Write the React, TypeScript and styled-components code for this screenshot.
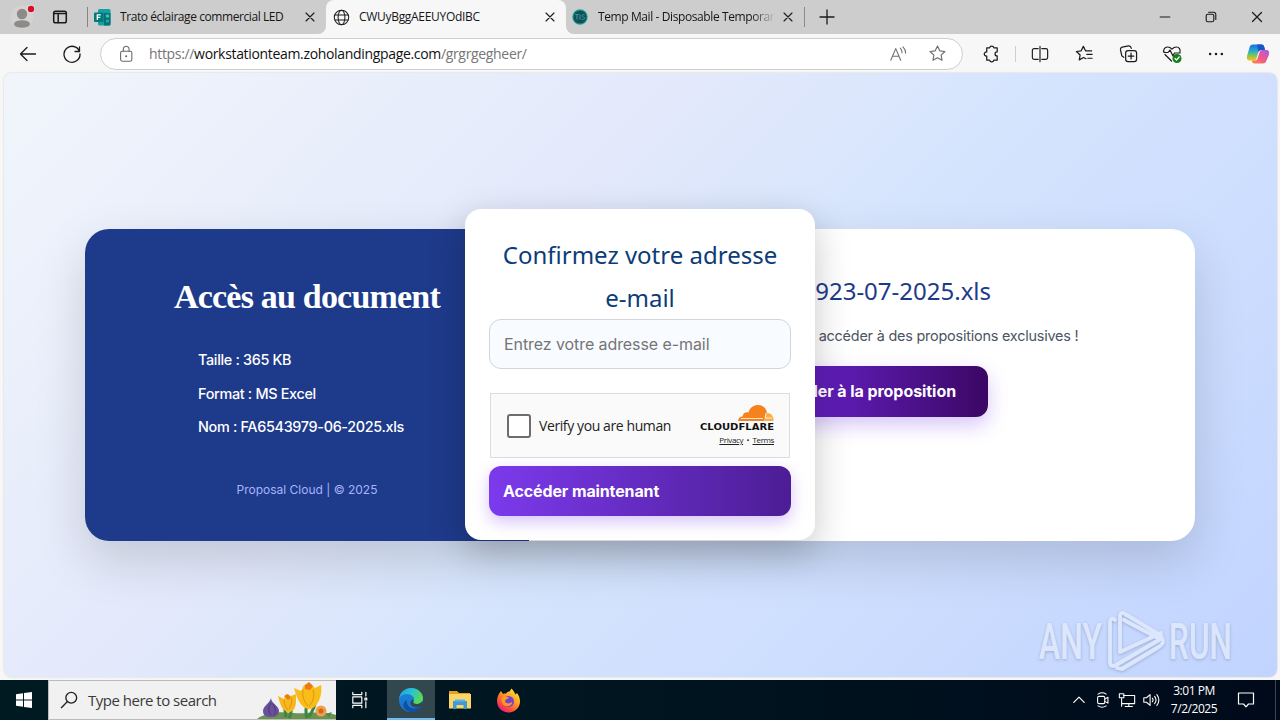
import React from 'react';
import styled, { createGlobalStyle } from 'styled-components';

const UI = `'Open Sans', 'Noto Sans', sans-serif`;

const Global = createGlobalStyle`
  * { box-sizing: border-box; }
  body { margin: 0; background: #f7f7f7; overflow: hidden; font-family: ${UI}; }
`;

const Screen = styled.div`
  width: 1280px;
  height: 720px;
  display: flex;
  flex-direction: column;
  background: #f7f7f7;
  overflow: hidden;
`;

/* ---------- browser chrome ---------- */
const TabStrip = styled.header`
  display: flex;
  height: 34px;
  background: #cdcdcd;
`;
const Slot = styled.div<{ $w: number }>`
  width: ${p => p.$w}px;
  flex: none;
  display: flex;
  align-items: center;
  justify-content: center;
`;
const Rule = styled.i<{ $h: number; $c: string }>`
  width: 1px;
  flex: none;
  height: ${p => p.$h}px;
  background: ${p => p.$c};
  align-self: center;
`;
const Tab = styled.div<{ $w: number; $radius: string; $active?: boolean; $pad: number }>`
  width: ${p => p.$w}px;
  flex: none;
  display: flex;
  align-items: center;
  padding-left: ${p => p.$pad}px;
  padding-right: 8px;
  background: ${p => (p.$active ? '#f7f7f7' : '#cdcdcd')};
  border-radius: ${p => p.$radius};
`;
const TabBacking = styled.div`
  display: flex;
  background: linear-gradient(#cdcdcd 50%, #f7f7f7 50%);
`;
const TabTitle = styled.span<{ $ls: number; $fade?: boolean }>`
  flex: 1;
  margin-left: 9px;
  font-size: 12px;
  line-height: 16px;
  letter-spacing: ${p => p.$ls}px;
  color: #161616;
  white-space: nowrap;
  overflow: hidden;
  ${p => p.$fade && '-webkit-mask-image: linear-gradient(90deg, #000 86%, transparent 100%);'}
`;
const Grow = styled.div`
  flex: 1;
`;
const Toolbar = styled.div`
  display: flex;
  align-items: center;
  height: 39px;
  padding-left: 6px;
`;
const Address = styled.div`
  width: 863px;
  height: 32px;
  margin-left: 6px;
  margin-right: 6px;
  display: flex;
  align-items: center;
  padding: 0 15px 0 16px;
  border: 1px solid #cfcfcf;
  border-radius: 16px;
  background: #fff;
`;
const Url = styled.span`
  flex: 1;
  margin-left: 14px;
  font-size: 14px;
  letter-spacing: -0.33px;
  color: #767676;
  white-space: nowrap;
  b { font-weight: 400; color: #111; }
`;

/* ---------- landing page ---------- */
const Page = styled.main`
  position: relative;
  height: 604px;
  width: 1273px;
  margin: 0 0 3px 4px;
  border-radius: 8px;
  padding: 156px 81px 0;
  background: linear-gradient(135deg, #f1f5fb 0%, #e3e9fb 37%, #d6e5fd 54%, #cfdffe 70%, #c1d4ff 100%);
  overflow: hidden;
  font-family: Inter, sans-serif;
  box-shadow: 0 0 2px rgba(0, 0, 0, 0.2);
`;
const Card = styled.section`
  width: 1110px;
  height: 312px;
  display: flex;
  border-radius: 24px;
  overflow: hidden;
  background: #fff;
  box-shadow: 0 20px 50px rgba(0, 0, 0, 0.15);
`;
const InfoPanel = styled.div`
  width: 444px;
  display: flex;
  flex-direction: column;
  align-items: center;
  background: #1e3a8a;
  color: #fff;
`;
const InfoTitle = styled.h1`
  margin: 46px 0 0;
  font: 700 34px/44px 'Liberation Serif', serif;
  letter-spacing: -0.8px;
  white-space: nowrap;
`;
const Facts = styled.ul`
  list-style: none;
  align-self: flex-start;
  margin: 29px 0 0;
  padding: 0 0 0 113px;
  font-size: 14.4px;
  font-weight: 500;
  letter-spacing: -0.32px;
`;
const Fact = styled.li`
  line-height: 23px;
  margin-bottom: 10.5px;
`;
const Foot = styled.small`
  margin-top: 31px;
  font-size: 12px;
  line-height: 20px;
  color: #a5b4fc;
`;
const OfferPanel = styled.div`
  width: 666px;
  padding-top: 40px;
  display: flex;
  flex-direction: column;
  align-items: center;
`;
const OfferTitle = styled.h2`
  margin: 0;
  font: 400 24px/43px 'Noto Sans', sans-serif;
  color: #1e3a8a;
`;
const OfferText = styled.p`
  margin: 12px 0 19px;
  padding-left: 8px;
  font-size: 14.4px;
  line-height: 23px;
  letter-spacing: -0.2px;
  color: #4b5563;
`;
const OfferButton = styled.button`
  width: 252px;
  height: 51px;
  padding: 0 0 2px;
  border: 0;
  border-radius: 12px;
  font: 700 16px Inter, sans-serif;
  letter-spacing: -0.06px;
  color: #fff;
  background: linear-gradient(90deg, #6d28d9, #5b1aad 45%, #3b0764);
  box-shadow: 0 8px 20px rgba(124, 58, 237, 0.3);
`;
const Modal = styled.form`
  position: absolute;
  left: 461px;
  top: 136px;
  width: 350px;
  height: 331px;
  padding: 24px 24px 0;
  border-radius: 16px;
  background: #fff;
  box-shadow: 0 12px 36px rgba(0, 0, 0, 0.22);
`;
const ModalTitle = styled.h2`
  margin: 0 -10px;
  font: 400 24px/43px 'Noto Sans', sans-serif;
  text-align: center;
  color: #0c3c78;
`;
const Field = styled.input`
  display: block;
  width: 302px;
  height: 50px;
  padding: 0 14px;
  border: 1px solid #d1d5db;
  border-radius: 12px;
  background: #f8fbff;
  font: 400 16px Inter, sans-serif;
  letter-spacing: -0.08px;
  &::placeholder { color: #757575; }
`;
const Captcha = styled.div`
  display: flex;
  align-items: center;
  width: 300px;
  height: 65px;
  margin: 24px 1px 8px;
  padding: 0 15px 0 16px;
  border: 1px solid #dcdcdc;
  background: #fafafa;
  font: 14px ${UI};
  color: #232323;
`;
const Box = styled.span`
  width: 24px;
  height: 24px;
  margin-right: 8px;
  border: 2px solid #6d6d6d;
  border-radius: 3px;
  background: #fff;
`;
const CaptchaLabel = styled.span`
  flex: 1;
  letter-spacing: -0.4px;
  white-space: nowrap;
`;
const Brand = styled.div`
  width: 74px;
  display: flex;
  flex-direction: column;
  align-items: flex-end;
`;
const Legal = styled.div`
  margin-top: 3px;
  font-size: 8px;
  line-height: 12px;
  letter-spacing: -0.38px;
  white-space: nowrap;
`;
const ModalButton = styled.button`
  display: block;
  width: 302px;
  height: 50px;
  padding: 0 14px;
  border: 0;
  border-radius: 12px;
  text-align: left;
  font: 700 16px Inter, sans-serif;
  letter-spacing: -0.12px;
  color: #fff;
  background: linear-gradient(90deg, #7c3aed, #4c1d95);
  box-shadow: 0 6px 16px rgba(124, 58, 237, 0.3);
`;
const Watermark = styled.svg`
  position: absolute;
  left: 1030px;
  top: 530px;
  overflow: visible;
`;

/* ---------- taskbar ---------- */
const Taskbar = styled.footer`
  display: flex;
  height: 40px;
  background: linear-gradient(90deg, #001a22, #001520 50%, #000a1a);
  color: #fff;
`;
const Search = styled.div`
  display: flex;
  align-items: center;
  width: 288px;
  height: 40px;
  padding-left: 11px;
  background: #f1f1f1;
  border: 1px solid #b9bcbd;
  border-width: 1px 0 1px 1px;
  font-size: 15px;
  letter-spacing: -0.5px;
  color: #3a3a3a;
`;
const SearchText = styled.span`
  flex: 1;
  margin-left: 10px;
  white-space: nowrap;
`;
const AppSlot = styled(Slot)<{ $on?: boolean }>`
  background: ${p => (p.$on ? '#33474f' : 'transparent')};
  box-shadow: ${p => (p.$on ? 'inset 0 -2px #76b9ed' : 'none')};
`;
const Clock = styled.div`
  width: 62px;
  padding-top: 2px;
  text-align: center;
  font-size: 12px;
  line-height: 18px;
  letter-spacing: -0.45px;
  white-space: nowrap;
`;

type LineProps = { s?: number; c?: string; w?: number; children: React.ReactNode };
const Line = ({ s = 20, c = '#1b1b1b', w = 1.2, children }: LineProps) => (
  <svg width={s} height={s} viewBox="0 0 20 20" fill="none" stroke={c} strokeWidth={w} strokeLinecap="round" strokeLinejoin="round">
    {children}
  </svg>
);
const STAR = 'M10 2.2l2.4 5 5.4.7-4 3.8 1 5.4-4.8-2.6-4.8 2.6 1-5.4-4-3.8 5.4-.7z';
const Cross = ({ s = 16 }: { s?: number }) => (
  <Line s={s} w={1.4}><path d="M5 5l10 10M15 5L5 15" /></Line>
);

const Avatar = () => (
  <svg width="28" height="28" viewBox="0 0 28 28">
    <circle cx="14" cy="14" r="11.5" fill="#d5d3d1" />
    <circle cx="14" cy="11" r="5.2" fill="#8d8b89" />
    <ellipse cx="14" cy="21" rx="8" ry="3.8" fill="#8d8b89" />
    <circle cx="23" cy="6" r="4.2" fill="#e2dfdf" />
    <circle cx="23" cy="6" r="3.2" fill="#d50f25" />
  </svg>
);
const FormsIcon = () => (
  <svg width="17" height="17" viewBox="0 0 17 17">
    <rect x="4" y="0" width="12.5" height="16.5" rx="1.5" fill="#16a0a0" />
    <path d="M10 4h6.5v11a1.5 1.5 0 0 1-1.5 1.5h-5z" fill="#077276" />
    <circle cx="13.5" cy="7" r="1.8" fill="#35c5bf" /><circle cx="13.5" cy="12" r="1.6" fill="#30aaa8" />
    <rect x="0" y="3.5" width="9.5" height="9.5" rx="1" fill="#03787c" />
    <path d="M3.3 11V5.8h3.5M3.3 8.3h3" stroke="#fff" strokeWidth="1.3" fill="none" />
  </svg>
);
const TempIcon = () => (
  <svg width="16" height="16" viewBox="0 0 16 16">
    <circle cx="8" cy="8" r="7.7" fill="#17a793" /><circle cx="8" cy="8" r="6.6" fill="#174d5b" />
    <path d="M3.2 5.5h3.5M5 5.5v5M8 5.5v5M12.5 6c-2-1-3 .2-2 1.500s3 .5 2 2.300c-.6.9-2 .9-3 .3" stroke="#2aa49c" fill="none" />
  </svg>
);
const Copilot = () => (
  <svg width="24" height="22" viewBox="0 0 24 22">
    <defs>
      <linearGradient id="cpA" x1="0" y1="0" x2="0" y2="1"><stop stopColor="#1a6fe0" /><stop offset=".45" stopColor="#2bb0c8" /><stop offset=".75" stopColor="#9bc83a" /><stop offset="1" stopColor="#f6c21a" /></linearGradient>
      <linearGradient id="cpB" x1="1" y1="0" x2="0" y2="1"><stop stopColor="#a45be8" /><stop offset=".5" stopColor="#ef5790" /><stop offset="1" stopColor="#ff8a3c" /></linearGradient>
    </defs>
    <path d="M7 1.5h8.5c1.8 0 2.3 1 2.8 2.8L19 7h-3.5c-2 0-2.8 1-3.3 2.8l-1.7 5.4C10 17 9 17.5 7.5 17.5H4c-3 0-3.6-2-2.8-5L3.500 4.500C4 2.600 5 1.500 7 1.500z" fill="url(#cpA)" />
    <path d="M11 1.500h4.500c1.800 0 2.300 1 2.800 2.800L19 7h-3.500c-1.600 0-2.500.7-3 2z" fill="#1b55c4" />
    <path d="M17 20.500H8.500c-1.800 0-2.300-1-2.800-3h3c1.500 0 2.500-.8 3-2.500l1.700-5.300C13.900 8 14.600 7 16.300 7H20c3 0 3.600 2 2.800 5l-2.300 5.500c-.7 2-1.700 3-3.500 3z" fill="url(#cpB)" />
  </svg>
);
const Flowers = () => (
  <svg width="80" height="38" viewBox="0 0 80 38">
    <path d="M1 38C12 30 26 31 38 32s28-3 42 2v4z" fill="#6a9350" />
    <path d="M30 36C28 26 29 22 28 18M51 37c-2-6-1-12 1-18M33 37c3-5 3-9 1-14M53 36c3-6 5-8 6-13" stroke="#3f8540" strokeWidth="3" fill="none" />
    <path d="M15 17c0 5 8 8 8 13 0 4-3 6-8 6s-8-2-8-6c0-5 7-8 8-13z" fill="#69509a" />
    <path d="M15 22c-3 4-3 8 0 12M17 23c3 5 3 8 1 11" stroke="#493777" fill="none" />
    <path d="M22 15l6 3 2-5 5 2 5-2v7c0 7-3 11-7 11-6 0-9-7-11-16z" fill="#f5b91d" />
    <path d="M38 7l7 3 3-6 7-1 4 4 6-3c2 11-4 24-12 24-7 0-12-9-15-21z" fill="#f8bd18" />
    <path d="M47 9c-1 6 1 12 5 16M57 9c2 6 0 12-4 16M28 19c0 4 2 8 4 10M36 17c0 4-1 8-3 11" stroke="#e29110" fill="none" />
    <path d="M49 4l4-3 4 4-3 4-5-1zM28 15l4-2 3 4-3 2z" fill="#ed7b14" />
    <circle cx="65" cy="30" r="5.500" fill="#efa04c" /><circle cx="65" cy="30" r="2.500" fill="#d9631d" />
    <path d="M70 33l6-2-3 5z" fill="#4d8845" />
  </svg>
);
const EdgeIcon = () => (
  <svg width="26" height="26" viewBox="0 0 26 26">
    <defs>
      <linearGradient id="eg1" x1="0" y1="0" x2="1" y2=".4"><stop stopColor="#1d9bdc" /><stop offset=".55" stopColor="#2bc3d2" /><stop offset="1" stopColor="#57d957" /></linearGradient>
      <linearGradient id="eg2" x1="0" y1="0" x2="0" y2="1"><stop stopColor="#1b86d9" /><stop offset="1" stopColor="#1672cf" /></linearGradient>
    </defs>
    <circle cx="13" cy="13" r="12" fill="url(#eg2)" />
    <path d="M1 12C2 5 7 1 13 1c7 0 12 5 12 10 0 4-3 6-6 6-3 0-4.500-1-3.500-2.500C17.500 11 14 7 9.500 7 5 7 2 9 1 12z" fill="url(#eg1)" />
    <path d="M9 13c-1 6 4 11 14 7-3 5-9 6-13 4-6-3-6-9-1-11z" fill="#114f9f" />
    <path d="M15.500 14.500c-1 1.500.5 2.500 3.500 2.500 2 0 4-1 5.500-3 .5 2.500-.5 5-2 6-5 1.500-9 0-10-3-.5-2 .5-4 2.500-4.500z" fill="#33474f" />
  </svg>
);
const FolderIcon = () => (
  <svg width="22" height="20" viewBox="0 0 22 20">
    <path d="M0 1h8l2 2h11v4H0z" fill="#e6a21e" /><path d="M0 4h22v14.500H0z" fill="#fbd667" />
    <path d="M4 11h14v8h-3.500v-4h-7v4H4z" fill="#3d9ad6" /><path d="M6 9.500h10v2H6z" fill="#5cb4e6" />
  </svg>
);
const FirefoxIcon = () => (
  <svg width="25" height="25" viewBox="0 0 25 25">
    <defs><linearGradient id="ff" x1=".9" y1="0" x2=".2" y2="1"><stop stopColor="#fff04a" /><stop offset=".4" stopColor="#ffa51f" /><stop offset=".75" stopColor="#ff4a3f" /><stop offset="1" stopColor="#e31587" /></linearGradient></defs>
    <path d="M5 3l2 3c1-.5 2-.6 3-.4C11 4 12.500 3.500 13.500 3.500L15.500.5c2 2 3 4 4 6L21 5c3 4 4 9 2 13-2 4-6 6.500-10.500 6.500C6 24.500 1 19.500 1 13c0-4 1.500-7 4-10z" fill="url(#ff)" />
    <circle cx="12.500" cy="13.500" r="5.500" fill="#7542d2" />
    <path d="M6 9c3-2 5 0 7 .5-1 2-4 1.500-4 4 2 3 5 2 7 .5 1 4-6 6-9 2.500C5.500 14 5 11 6 9z" fill="#ff9822" />
  </svg>
);

export default function App() {
  return (
    <Screen>
      <Global />
      <TabStrip>
        <Slot $w={44}><Avatar /></Slot>
        <Slot $w={32}>
          <Line s={18} w={1.7}><rect x="3" y="3.500" width="14" height="13" rx="2" /><path d="M3 6h14M8 6v10" /></Line>
        </Slot>
        <TabBacking>
          <Tab $w={250} $pad={11} $radius="0 0 8px 0">
            <Rule $h={20} $c="#8c8080" />
            <Slot $w={6} />
            <FormsIcon />
            <TabTitle $ls={-0.42}>Trato éclairage commercial LED</TabTitle>
            <Cross />
          </Tab>
          <Tab $w={240} $active $pad={7} $radius="8px 8px 0 0">
            <Line s={17} w={1.2}><circle cx="10" cy="10" r="8.500" /><ellipse cx="10" cy="10" rx="4" ry="8.500" /><path d="M2.300 7h15.400M2.300 13h15.400" /></Line>
            <TabTitle $ls={-0.3}>CWUyBggAEEUYOdIBC</TabTitle>
            <Cross />
          </Tab>
          <Tab $w={238} $pad={6} $radius="0 0 0 8px">
            <TempIcon />
            <Slot $w={1} />
            <TabTitle $ls={-0.4} $fade>Temp Mail - Disposable Temporar</TabTitle>
            <Slot $w={4} />
            <Cross />
            <Slot $w={-1} />
          </Tab>
        </TabBacking>
        <Rule $h={20} $c="#8b8b8b" />
        <Slot $w={43}><Line s={20} w={1.300}><path d="M10 3v14M3 10h14" /></Line></Slot>
        <Grow />
        <Slot $w={46}><Line s={16} w={1.400}><path d="M4 10h12" /></Line></Slot>
        <Slot $w={46}><Line s={16} w={1.400}><rect x="4" y="6.500" width="9.500" height="9.500" rx="2" /><path d="M7 4h6a3 3 0 0 1 3 3v6" /></Line></Slot>
        <Slot $w={46}><Cross s={18} /></Slot>
      </TabStrip>

      <Toolbar>
        <Slot $w={44}><Line w={1.300}><path d="M2.500 10h15M9 3.500L2.500 10 9 16.500" /></Line></Slot>
        <Slot $w={44}><Line w={1.300}><path d="M17.500 7.500A8 8 0 1 0 18 10M17.500 3v4.500H13" /></Line></Slot>
        <Address>
          <Line s={18} c="#686868"><rect x="4" y="7" width="12.500" height="11" rx="1.800" /><path d="M7 7V4.500a3.200 3.200 0 0 1 6.400 0V7" /><circle cx="10.200" cy="12.500" r=".6" /></Line>
          <Url>https://<b>workstationteam.zoholandingpage.com</b>/grgrgegheer/</Url>
          <Slot $w={40}><Line s={18} c="#6d6d6d"><path d="M2 17L7.500 4 13 17M4 12.500h7M12.500 3.500c1.500 1.500 2 3 2 5M15.500 2c2 2 3 4 3 7" /></Line></Slot>
          <Slot $w={10} />
          <Line s={19} c="#6d6d6d"><path d={STAR} /></Line>
        </Address>
        <Slot $w={44}><Line s={19} w={1.300}><path d="M5 4h3a2.300 2.300 0 0 1 4.500 0H16v4.300c-3 0-3 4.200 0 4.200V17h-3.500a2.300 2.300 0 0 1-4.500 0H5v-4.200c-3.500.2-3.500-4.600 0-4.400z" /></Line></Slot>
        <Slot $w={4}><Rule $h={16} $c="#cfcfcf" /></Slot>
        <Slot $w={45}><Line s={18} w={1.300}><path d="M8 4H3.500A2 2 0 0 0 1.500 6v8a2 2 0 0 0 2 2H8M12 4h4.500a2 2 0 0 1 2 2v8a2 2 0 0 1-2 2H12M10 1.500v17" /></Line></Slot>
        <Slot $w={44}><Line s={19} w={1.300}><path d="M11.500 15.500l-2.500-1.300-4.500 2.500.9-5.200L1.500 7.900l5-.7L8.800 2.500l2.300 4.700h6.400M12.500 11h5.500M13.500 15h4.500" /></Line></Slot>
        <Slot $w={44}><Line s={19} w={1.300}><rect x="7" y="7" width="11.500" height="11.500" rx="2.500" /><path d="M12.700 9.700v6M9.700 12.700h6M5 14l-2-1.500L1.500 6C1.300 4.600 2 3.700 3.300 3.300L10 2c1.500-.2 2.500.5 3 2.500" /></Line></Slot>
        <Slot $w={44}>
          <Line s={20} w={1.200}>
            <path d="M9.500 17L3 10.500M18 8.500c.8-3-1-5.500-3.500-5.500C12.500 3 11 4 10 5.200 9 4 7.500 3 5.500 3 2.500 3 1 6 2 8.500h4l2-2.500 3 6 1.500-3h5.500" />
            <circle cx="15" cy="14.500" r="4.500" fill="#137e1c" stroke="none" /><path d="M13 14.500l1.500 1.500 2.700-3" stroke="#fff" />
          </Line>
        </Slot>
        <Slot $w={44}><Line s={18} w={0}><g fill="#1b1b1b"><circle cx="3.500" cy="10" r="1.400" /><circle cx="10" cy="10" r="1.400" /><circle cx="16.500" cy="10" r="1.400" /></g></Line></Slot>
        <Slot $w={40}><Copilot /></Slot>
      </Toolbar>

      <Page>
        <Card>
          <InfoPanel>
            <InfoTitle>Accès au document</InfoTitle>
            <Facts>
              <Fact>Taille : 365 KB</Fact>
              <Fact>Format : MS Excel</Fact>
              <Fact>Nom : FA6543979-06-2025.xls</Fact>
            </Facts>
            <Foot>Proposal Cloud | © 2025</Foot>
          </InfoPanel>
          <OfferPanel>
            <OfferTitle>FA6543923-07-2025.xls</OfferTitle>
            <OfferText>Cliquez ci-dessous pour accéder à des propositions exclusives !</OfferText>
            <OfferButton>Accéder à la proposition</OfferButton>
          </OfferPanel>
        </Card>
        <Modal>
          <ModalTitle>Confirmez votre adresse<br />e-mail</ModalTitle>
          <Field placeholder="Entrez votre adresse e-mail" />
          <Captcha>
            <Box />
            <CaptchaLabel>Verify you are human</CaptchaLabel>
            <Brand>
              <svg width="74" height="26" viewBox="0 0 74 26">
                <path d="M38 16c.2-3 2-4.500 4.500-4.500C43 8 46 6.500 48.500 7.500 50 2 54 0 58 0c5 0 8.500 3.500 9 8l-3 8z" fill="#f6821f" />
                <path d="M64 16l3-8c4 0 7 3.500 6.500 8z" fill="#fbad41" />
                <path d="M41 13.500h22M66 8l-1 5h7" stroke="#fff" strokeWidth=".8" fill="none" />
                <text x="0" y="25.300" textLength="74" lengthAdjust="spacingAndGlyphs" fontFamily="DejaVu Sans" fontWeight="700" fontSize="8.500" fill="#111">CLOUDFLARE</text>
              </svg>
              <Legal><u>Privacy</u>&nbsp; • &nbsp;<u>Terms</u></Legal>
            </Brand>
          </Captcha>
          <ModalButton type="button">Accéder maintenant</ModalButton>
        </Modal>
        <Watermark width="205" height="74" viewBox="0 0 205 74">
          <defs><filter id="soft" x="-10%" y="-10%" width="120%" height="120%"><feDropShadow dx="0" dy="1" stdDeviation="1.500" floodColor="#56688f" floodOpacity=".6" /></filter></defs>
          <g filter="url(#soft)" opacity=".65">
            <g fontFamily="Roboto" fontSize="50" fontWeight="500" fill="#e9eefa">
              <text x="5" y="56" textLength="63" lengthAdjust="spacingAndGlyphs">ANY</text>
              <text x="135" y="56" textLength="63" lengthAdjust="spacingAndGlyphs">RUN</text>
            </g>
            <path d="M81 17c-3-3-5-1-5 2v40c0 4 3 5 6 3l43-25M86 49V13c0-3 2-4 5-2l35 21c3 2 1 4-2 3L90 17M86 49l41-19M88 66l35-21c7-4 8-8 2-12M88 66l-5-1" fill="none" stroke="#e9eefa" strokeWidth="3.800" strokeLinecap="round" strokeLinejoin="round" />
          </g>
        </Watermark>
      </Page>

      <Taskbar>
        <Slot $w={48}>
          <svg width="16" height="16" viewBox="0 0 16 16" fill="#fff"><path d="M0 2.200l7-1v6.300H0zM8 1.100L16 0v7.500H8zM0 8.500h7v6.300l-7-1zM8 8.500h8V16l-8-1.100z" /></svg>
        </Slot>
        <Search>
          <Line s={18} c="#222" w={1.500}><circle cx="12.500" cy="7.500" r="6" /><path d="M8 12L1.500 18.500" /></Line>
          <SearchText>Type here to search</SearchText>
          <Flowers />
        </Search>
        <Slot $w={48}>
          <Line s={18} c="#fff" w={1.300}><path d="M2 1.500V4h10V1.500M2 18.500V16h10v2.500M2 6.500h10v7H2zM16.500 1.500v4M16.500 12v6.500M15.500 8h2v2h-2z" /></Line>
        </Slot>
        <Slot $w={3} />
        <AppSlot $w={48} $on><EdgeIcon /></AppSlot>
        <AppSlot $w={49}><FolderIcon /></AppSlot>
        <AppSlot $w={49}><FirefoxIcon /></AppSlot>
        <Grow />
        <Slot $w={24}><Line s={16} c="#fff" w={1.500}><path d="M3.500 13L10 6.500l6.500 6.500" /></Line></Slot>
        <Slot $w={24}><Line s={18} c="#fff"><rect x="4" y="6" width="8" height="8" rx="1.500" /><path d="M12 9l3.500-2v6.500L12 11.500M4.500 3.500c3-2 6-2 9 0M4.500 16.500c3 2 6 2 9 0" /></Line></Slot>
        <Slot $w={24}><Line s={18} c="#fff"><path d="M6 5h12.500v9H5M12 14v3M8 17.300h8M1.500 3h5v4.500h-5zM4 7.500V17" /></Line></Slot>
        <Slot $w={24}><Line s={18} c="#fff"><path d="M2 7.500h3L9 4v12l-4-3.500H2zM11.500 8c1 1.200 1 2.800 0 4M14 6c2 2.500 2 5.500 0 8M16.500 4c3 4 3 8 0 12" /></Line></Slot>
        <Clock>3:01 PM<br />7/2/2025</Clock>
        <Slot $w={42}><Line s={20} c="#fff"><path d="M2.500 3h15v11h-5L10 16.800 7.500 14h-5z" /></Line></Slot>
        <Slot $w={8} />
        <Rule $h={40} $c="#3a4650" />
        <Slot $w={4} />
      </Taskbar>
    </Screen>
  );
}
